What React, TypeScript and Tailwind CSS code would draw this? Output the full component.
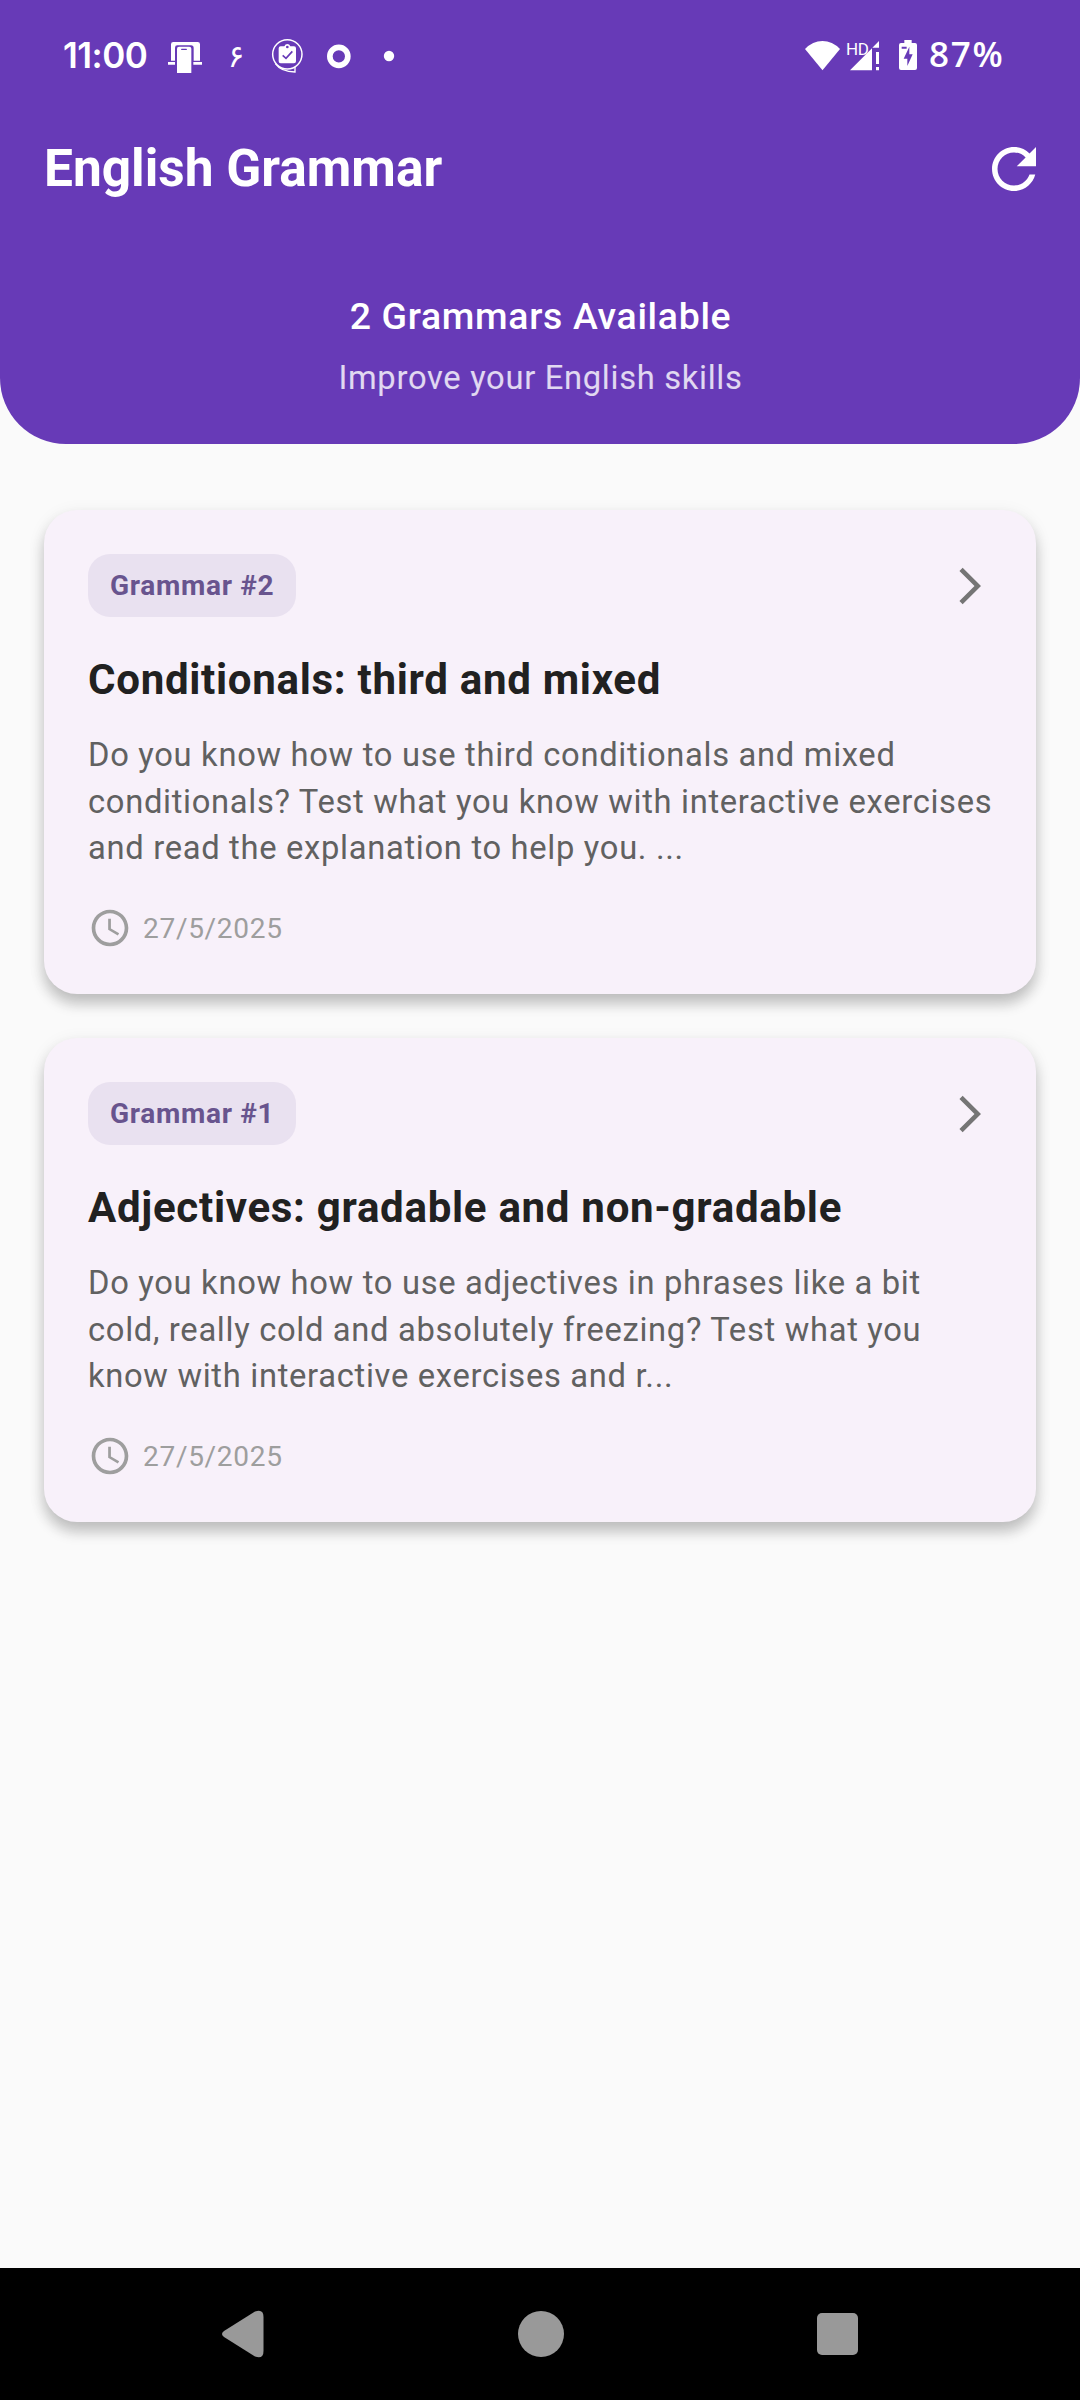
import React from 'react';

type Grammar = { id: number; title: string; lines: string[]; date: string };

const grammars: Grammar[] = [
  {
    id: 2,
    title: 'Conditionals: third and mixed',
    lines: [
      'Do you know how to use third conditionals and mixed',
      'conditionals? Test what you know with interactive exercises',
      'and read the explanation to help you. ...',
    ],
    date: '27/5/2025',
  },
  {
    id: 1,
    title: 'Adjectives: gradable and non-gradable',
    lines: [
      'Do you know how to use adjectives in phrases like a bit',
      'cold, really cold and absolutely freezing? Test what you',
      'know with interactive exercises and r...',
    ],
    date: '27/5/2025',
  },
];

function StatusBar() {
  return (
    <div className="flex h-[112px] items-center justify-between pr-[76px] pl-[63px]">
      <div className="flex items-center">
        <span className="mb-[3px] w-[105px] font-['Inter',sans-serif] text-[35px] leading-[40px] font-semibold tracking-[-0.5px]">
          11:00
        </span>
        {/* phone in front of a monitor */}
        <svg className="h-[40px] w-[35px]" viewBox="384 48 105 120">
          <path
            fill="#fff"
            d="M400 66h73q7 0 7 7v49h-19V84q0-8-8-8h-41q-7 0-7 7v39h-12V73q0-7 7-7zM384 126h21v8h-21zM460 126h26v8h-26z"
          />
          <path d="M417 80h31q6 0 6 6v73h-43V86q0-6 6-6z" fill="#fff" />
          <rect x="423" y="86" width="18" height="4" rx="2" fill="#673ab7" />
        </svg>
        <span className="ml-[18px] w-[30px] text-center font-['DejaVu_Sans',sans-serif] text-[31px] leading-[40px]">
          ۶
        </span>
        {/* clipboard inside a chat bubble */}
        <svg className="ml-[19px] h-[40px] w-[35px]" viewBox="690 48 105 120">
          <circle cx="742" cy="103" r="44" fill="none" stroke="#fff" strokeWidth="4.5" />
          <path
            d="M706 131q18 25 59 25v-16"
            fill="none"
            stroke="#fff"
            strokeWidth="4"
          />
          <path
            fill="#fff"
            d="M722 79h11q3-7 9-7t9 7h11q6 0 6 6v39q0 6-6 6h-40q-6 0-6-6V85q0-6 6-6z"
          />
          <circle cx="742" cy="81" r="4" fill="#673ab7" />
          <path d="M728 106l10 9 19-21" fill="none" stroke="#673ab7" strokeWidth="5" />
        </svg>
        <svg className="ml-[20px] h-[40px] w-[28px]" viewBox="855 48 84 120">
          <circle cx="896.5" cy="109" r="27" fill="none" stroke="#fff" strokeWidth="17" />
        </svg>
        <svg className="ml-[30px] h-[40px] w-[12px]" viewBox="1029 48 36 120">
          <circle cx="1047" cy="108" r="15.5" fill="#fff" />
        </svg>
      </div>

      <div className="flex items-center">
        <svg className="h-[40px] w-[35px]" viewBox="75 48 105 120">
          <path d="M127.500 151L75 87Q98 63 127.500 63T180 87z" fill="#fff" />
        </svg>
        <div className="relative ml-[5px] h-[40px] w-[35px]">
          <svg className="h-[40px] w-[35px]" viewBox="195 48 105 120">
            <path
              d="M210 151L276 85V151zM277 83L297 63V83zM288 96h9v36h-9zM288 141h9v10h-9z"
              fill="#fff"
            />
          </svg>
          <span className="absolute top-[5px] left-[1px] font-['Roboto',sans-serif] text-[17px] leading-[16px] tracking-[-0.5px]">
            HD
          </span>
        </div>
        <svg className="ml-[18px] h-[40px] w-[20px]" viewBox="354 48 60 120">
          <path
            d="M373 60h22v9h10q6 0 6 6v69q0 6-6 6h-42q-6 0-6-6V75q0-6 6-6h10z"
            fill="#fff"
          />
          <path d="M388 80l-17 36h11v22l16-35h-10zM365 80h15v6h-15z" fill="#673ab7" />
        </svg>
        <span className="mb-[5px] ml-[11px] w-[75px] font-['Open_Sans',sans-serif] text-[35px] leading-[40px] font-semibold tracking-[1.8px]">
          87%
        </span>
      </div>
    </div>
  );
}

function Header() {
  return (
    <header className="h-[444px] rounded-b-[66px] bg-[#673ab7] text-white">
      <StatusBar />
      <div className="flex justify-between pt-[24px] pr-[33px] pl-[44px]">
        <h1 className="text-[51.425px] leading-[66px] font-bold">English Grammar</h1>
        <svg className="h-[66px] w-[66px]" viewBox="0 0 24 24" fill="currentColor">
          <path d="M17.650 6.350C16.200 4.900 14.210 4 12 4c-4.420 0-7.990 3.580-7.990 8s3.570 8 7.990 8c3.730 0 6.840-2.550 7.730-6h-2.080c-.82 2.330-3.040 4-5.650 4-3.310 0-6-2.690-6-6s2.690-6 6-6c1.660 0 3.140.69 4.220 1.780L13 11h7V4l-2.350 2.350z" />
        </svg>
      </div>
      <div className="mt-[92px] pl-px text-center tracking-[0.6875px]">
        <p className="text-[37.4px] leading-[44px] font-medium">2 Grammars Available</p>
        <p className="mt-[20px] text-[32.725px] leading-[40px] text-white/80">
          Improve your English skills
        </p>
      </div>
    </header>
  );
}

function GrammarCard({ grammar }: { grammar: Grammar }) {
  return (
    <article className="h-[484px] rounded-[33px] bg-[#f8f1fa] p-[44px] tracking-[0.6875px] shadow-[0_10px_14px_rgba(0,0,0,0.2),0_4px_18px_rgba(0,0,0,0.08)]">
      <div className="flex items-center justify-between">
        <span className="rounded-[22px] bg-[#e9e1f0] px-[22px] py-[15px] text-[28.05px] leading-[33px] font-bold text-[#68548e]">
          Grammar #{grammar.id}
        </span>
        <svg className="h-[44px] w-[44px] text-[#757575]" viewBox="0 0 24 24" fill="currentColor">
          <path d="M6.230 20.230L8 22l10-10L8 2 6.230 3.770 14.460 12z" />
        </svg>
      </div>
      <h2 className="mt-[38px] text-[42.075px] leading-[50px] font-bold text-[#212121]">
        {grammar.title}
      </h2>
      <p className="mt-[27.125px] h-[138.875px] text-[32.725px] leading-[46.500px] whitespace-nowrap text-[#616161]">
        {grammar.lines.map((line) => (
          <span key={line} className="block">
            {line}
          </span>
        ))}
      </p>
      <div className="mt-[35px] flex items-center gap-[11px] text-[#9e9e9e]">
        <svg className="h-[44px] w-[44px]" viewBox="0 0 24 24" fill="currentColor">
          <path d="M11.990 2C6.470 2 2 6.480 2 12s4.470 10 9.990 10C17.520 22 22 17.520 22 12S17.520 2 11.990 2zM12 20c-4.420 0-8-3.580-8-8s3.580-8 8-8 8 3.580 8 8-3.580 8-8 8zm.5-13H11v6l5.250 3.150.75-1.230-4.500-2.670z" />
        </svg>
        <span className="text-[28.05px] leading-[33px]">{grammar.date}</span>
      </div>
    </article>
  );
}

function NavigationBar() {
  return (
    <nav className="flex h-[132px] items-center bg-black pl-[222px]">
      <svg className="h-[48px] w-[42px]" viewBox="0 0 42 48">
        <path
          d="M2 21L33 1.500Q41.500-1.500 41.500 7V41Q41.500 49.500 33 46.500L2 27Q-2 24 2 21z"
          fill="#999"
        />
      </svg>
      <div className="ml-[253.500px] h-[46px] w-[46px] rounded-full bg-[#999]" />
      <div className="ml-[253.500px] h-[42px] w-[41px] rounded-[5px] bg-[#999]" />
    </nav>
  );
}

export default function App() {
  return (
    <div className="flex h-[2400px] w-[1080px] flex-col bg-[#fafafa] font-['Roboto',sans-serif]">
      <Header />
      <main className="flex flex-1 flex-col gap-[44px] px-[44px] pt-[66px]">
        {grammars.map((grammar) => (
          <GrammarCard key={grammar.id} grammar={grammar} />
        ))}
      </main>
      <NavigationBar />
    </div>
  );
}
